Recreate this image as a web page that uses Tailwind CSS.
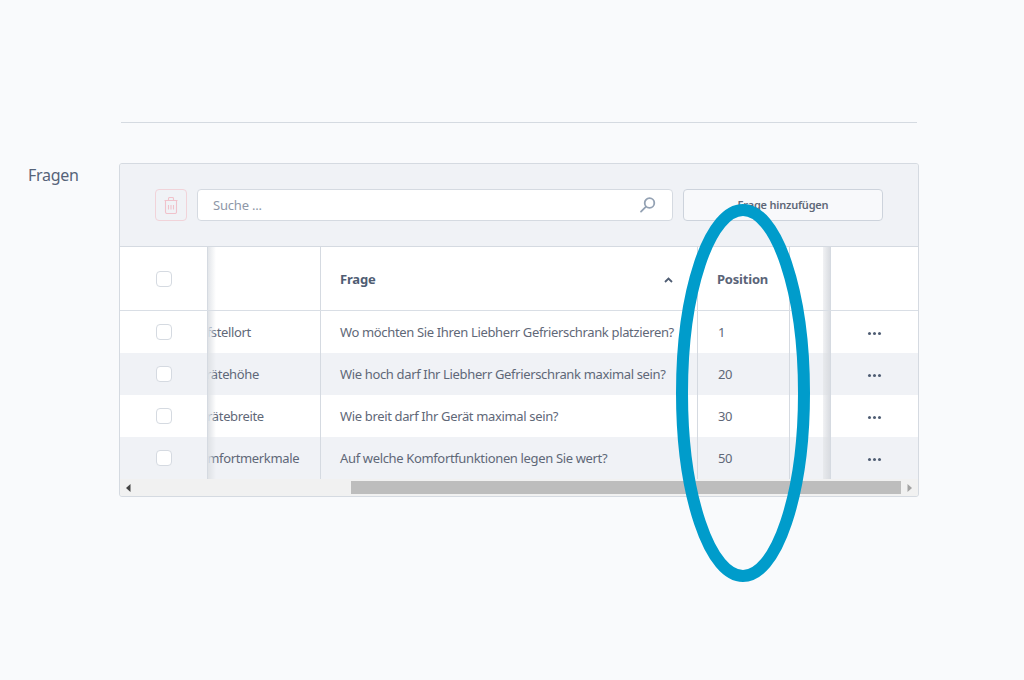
<!DOCTYPE html>
<html><head><meta charset="utf-8"><script src="https://cdn.jsdelivr.net/npm/@tailwindcss/browser@4"></script></head>
<body class="m-0 bg-[#f9fafc]">
<div class="relative w-[1024px] h-[680px] overflow-hidden font-['Noto_Sans','Liberation_Sans',sans-serif] text-[#5f6878] text-[13px] tracking-[-0.35px]">
  <div class="pt-[122px] pl-[121px]"><div class="w-[796px] h-px bg-[#d5dae1]"></div></div>
  <div class="flex pt-[40px] pl-[28px]">
    <div class="w-[91px] text-[16px] leading-[24px] tracking-[-0.3px] text-[#566379]">Fragen</div>
    <div class="w-[800px] h-[334px] bg-[#f1f1f1] border border-[#d5dae1] rounded-[3px] overflow-hidden flex flex-col">
      <div class="h-[83px] shrink-0 bg-[#f0f2f6] border-b border-[#d5dae1] flex items-center pl-[35px]">
        <div class="w-[32px] h-[32px] rounded-[4px] border border-[#f1d3d9] flex items-center justify-center">
          <svg width="14" height="17" viewBox="0 0 14 17" fill="none" stroke="#f0c2cb" stroke-width="1.1"><path d="M0.5 3.5h13M1.5 3.5v11.5a1.5 1.5 0 0 0 1.5 1.5h8a1.5 1.5 0 0 0 1.5-1.5V3.5M4.5 3.5V1.5a1 1 0 0 1 1-1h3a1 1 0 0 1 1 1v2M4.5 8v4.5M7 8v4.5M9.5 8v4.5"/></svg>
        </div>
        <div class="ml-[10px] w-[476px] h-[32px] bg-white rounded-[4px] border border-[#d5dae1] flex items-center justify-between pl-[15px] pr-[16px]">
          <span class="text-[#8e97a8] tracking-[-0.2px] pt-[2px]">Suche ...</span>
          <svg width="17" height="18" viewBox="0 0 17 18" fill="none" stroke="#93a1b3" stroke-width="1.8" stroke-linecap="round"><circle cx="10.5" cy="7" r="4.8"/><path d="M7 10.6 2 15.6"/></svg>
        </div>
        <div class="ml-[10px] w-[200px] h-[32px] bg-[#f8f9fb] rounded-[4px] border border-[#cdd3dc] flex items-center justify-center text-[11px] tracking-[-0.2px] font-semibold text-[#5f6878]">Frage hinzufügen</div>
      </div>
      <div class="flex-1 flex flex-col">
        <div class="flex h-[64px] bg-white border-b border-[#d9dee5] items-stretch font-bold text-[#4f5d73] tracking-[-0.2px]">
          <div class="w-[88px] flex items-center justify-center border-r border-[#d5dae1]"><span class="w-[16px] h-[16px] bg-white border border-[#d5dae1] rounded-[4px]"></span></div>
          <div class="w-[113px] border-r border-[#d5dae1] bg-linear-to-r from-[#e3e6ea] to-white to-[8px]"></div>
          <div class="w-[377px] border-r border-[#d5dae1] flex items-center justify-between pl-[19px] pr-[24px] pt-[2px]">Frage
            <svg width="9" height="6" viewBox="0 0 9 6" fill="none" stroke="#4f5d73" stroke-width="1.8"><path d="M1 5l3.5-3.5L8 5"/></svg></div>
          <div class="w-[92px] border-r border-[#d5dae1] flex items-center pl-[19px] pt-[2px] text-[#5a6478]">Position</div>
          <div class="w-[33px]"></div>
          <div class="w-[8px] bg-linear-to-r from-[#f1f2f4] to-[#d9dce1] border-r border-[#d5dae1]"></div>
          <div class="w-[87px]"></div>
        </div>
        <div class="flex h-[42px] bg-white">
          <div class="w-[88px] flex items-center justify-center border-r border-[#d5dae1]"><span class="w-[16px] h-[16px] bg-white border border-[#d5dae1] rounded-[4px]"></span></div>
          <div class="w-[113px] border-r border-[#d5dae1] overflow-hidden relative flex items-center pt-[2px]"><span class="ml-[-17px] whitespace-nowrap">Aufstellort</span><div class="absolute inset-y-0 left-0 w-[8px] bg-linear-to-r from-[#dfe2e6]"></div></div>
          <div class="w-[377px] border-r border-[#d5dae1] flex items-center pl-[19px] pt-[2px] whitespace-nowrap">Wo möchten Sie Ihren Liebherr Gefrierschrank platzieren?</div>
          <div class="w-[92px] border-r border-[#d5dae1] flex items-center pl-[20px] pt-[2px]">1</div>
          <div class="w-[33px]"></div>
          <div class="w-[8px] bg-linear-to-r from-[#f1f2f4] to-[#d9dce1] border-r border-[#d5dae1]"></div>
          <div class="w-[87px] flex items-center justify-center gap-[2px] pt-[2px] pr-px"><i class="w-[3px] h-[3px] rounded-full bg-[#4f5d73]"></i><i class="w-[3px] h-[3px] rounded-full bg-[#4f5d73]"></i><i class="w-[3px] h-[3px] rounded-full bg-[#4f5d73]"></i></div>
        </div>
        <div class="flex h-[42px] bg-[#f0f2f6]">
          <div class="w-[88px] flex items-center justify-center border-r border-[#d5dae1]"><span class="w-[16px] h-[16px] bg-white border border-[#d5dae1] rounded-[4px]"></span></div>
          <div class="w-[113px] border-r border-[#d5dae1] overflow-hidden relative flex items-center pt-[2px]"><span class="ml-[-18px] whitespace-nowrap">Gerätehöhe</span><div class="absolute inset-y-0 left-0 w-[8px] bg-linear-to-r from-[#dfe2e6]"></div></div>
          <div class="w-[377px] border-r border-[#d5dae1] flex items-center pl-[19px] pt-[2px] whitespace-nowrap">Wie hoch darf Ihr Liebherr Gefrierschrank maximal sein?</div>
          <div class="w-[92px] border-r border-[#d5dae1] flex items-center pl-[20px] pt-[2px]">20</div>
          <div class="w-[33px]"></div>
          <div class="w-[8px] bg-linear-to-r from-[#e8eaed] to-[#d9dce1] border-r border-[#d5dae1]"></div>
          <div class="w-[87px] flex items-center justify-center gap-[2px] pt-[2px] pr-px"><i class="w-[3px] h-[3px] rounded-full bg-[#4f5d73]"></i><i class="w-[3px] h-[3px] rounded-full bg-[#4f5d73]"></i><i class="w-[3px] h-[3px] rounded-full bg-[#4f5d73]"></i></div>
        </div>
        <div class="flex h-[42px] bg-white">
          <div class="w-[88px] flex items-center justify-center border-r border-[#d5dae1]"><span class="w-[16px] h-[16px] bg-white border border-[#d5dae1] rounded-[4px]"></span></div>
          <div class="w-[113px] border-r border-[#d5dae1] overflow-hidden relative flex items-center pt-[2px]"><span class="ml-[-17px] whitespace-nowrap">Gerätebreite</span><div class="absolute inset-y-0 left-0 w-[8px] bg-linear-to-r from-[#dfe2e6]"></div></div>
          <div class="w-[377px] border-r border-[#d5dae1] flex items-center pl-[19px] pt-[2px] whitespace-nowrap">Wie breit darf Ihr Gerät maximal sein?</div>
          <div class="w-[92px] border-r border-[#d5dae1] flex items-center pl-[20px] pt-[2px]">30</div>
          <div class="w-[33px]"></div>
          <div class="w-[8px] bg-linear-to-r from-[#f1f2f4] to-[#d9dce1] border-r border-[#d5dae1]"></div>
          <div class="w-[87px] flex items-center justify-center gap-[2px] pt-[2px] pr-px"><i class="w-[3px] h-[3px] rounded-full bg-[#4f5d73]"></i><i class="w-[3px] h-[3px] rounded-full bg-[#4f5d73]"></i><i class="w-[3px] h-[3px] rounded-full bg-[#4f5d73]"></i></div>
        </div>
        <div class="flex h-[42px] bg-[#f0f2f6]">
          <div class="w-[88px] flex items-center justify-center border-r border-[#d5dae1]"><span class="w-[16px] h-[16px] bg-white border border-[#d5dae1] rounded-[4px]"></span></div>
          <div class="w-[113px] border-r border-[#d5dae1] overflow-hidden relative flex items-center pt-[2px]"><span class="ml-[-16px] whitespace-nowrap">Komfortmerkmale</span><div class="absolute inset-y-0 left-0 w-[8px] bg-linear-to-r from-[#dfe2e6]"></div></div>
          <div class="w-[377px] border-r border-[#d5dae1] flex items-center pl-[19px] pt-[2px] whitespace-nowrap">Auf welche Komfortfunktionen legen Sie wert?</div>
          <div class="w-[92px] border-r border-[#d5dae1] flex items-center pl-[20px] pt-[2px]">50</div>
          <div class="w-[33px]"></div>
          <div class="w-[8px] bg-linear-to-r from-[#e8eaed] to-[#d9dce1] border-r border-[#d5dae1]"></div>
          <div class="w-[87px] flex items-center justify-center gap-[2px] pt-[2px] pr-px"><i class="w-[3px] h-[3px] rounded-full bg-[#4f5d73]"></i><i class="w-[3px] h-[3px] rounded-full bg-[#4f5d73]"></i><i class="w-[3px] h-[3px] rounded-full bg-[#4f5d73]"></i></div>
        </div>
        <div class="flex-1 flex items-center bg-[#f1f1f1]">
          <svg class="ml-[5px]" width="7" height="8" viewBox="0 0 7 8"><path d="M5.5 0v8L1 4z" fill="#444"/></svg>
          <div class="ml-[219px] w-[550px] h-[13px] bg-[#bdbdbd]"></div>
          <svg class="ml-[5px]" width="7" height="8" viewBox="0 0 7 8"><path d="M1.5 0v8L6 4z" fill="#a3a3a3"/></svg>
        </div>
      </div>
    </div>
  </div>
  <svg class="absolute left-0 top-0 pointer-events-none" width="1024" height="680" fill="none"><ellipse cx="743" cy="393" rx="61" ry="183" stroke="#009ccb" stroke-width="12"/></svg>
</div>
</body></html>
